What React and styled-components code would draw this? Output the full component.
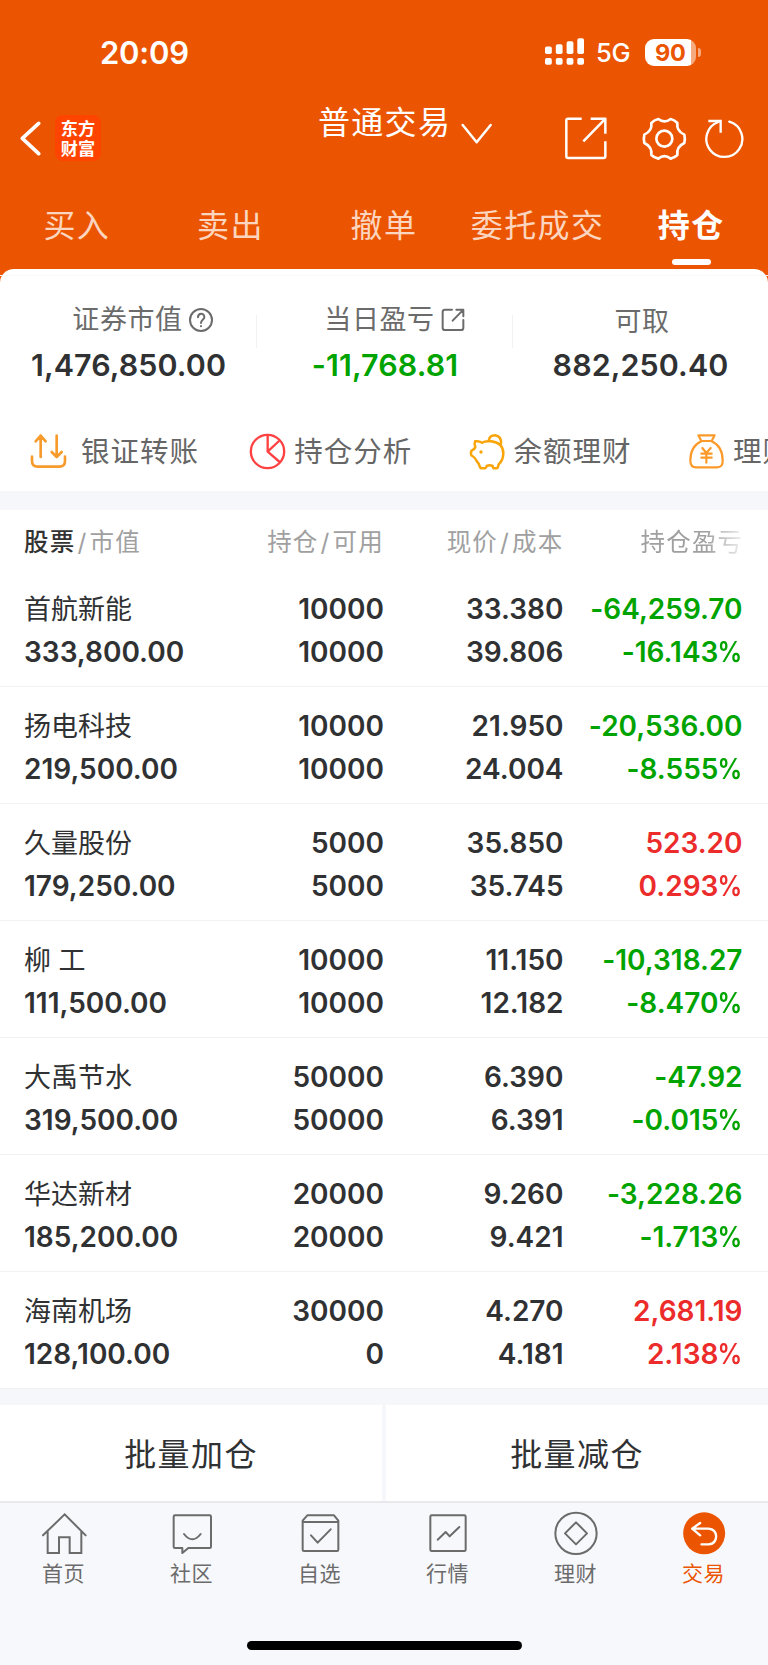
import React from "react";
import styled, { createGlobalStyle } from "styled-components";

const GlobalStyle = createGlobalStyle`
  * {
    box-sizing: border-box;
  }
  body {
    margin: 0;
    background: #f7f8fb;
    font-family: Inter, "Noto Sans CJK SC", sans-serif;
    color: #303133;
  }
  svg {
    display: block;
    flex: none;
  }
`;

const Page = styled.div`
  width: 768px;
  height: 1665px;
  display: flex;
  flex-direction: column;
  overflow: hidden;
  background: #f6f7fa;
`;

const Header = styled.header`
  height: 282px;
  flex: none;
  background: #eb5502;
  color: #fff;
`;

const StatusBar = styled.div`
  height: 104px;
  padding: 0 67px 0 100px;
  display: flex;
  align-items: center;
  justify-content: space-between;
`;

const Time = styled.span`
  font-size: 31px;
  font-weight: 600;
  line-height: 40px;
  letter-spacing: -0.2px;
  padding-top: 2px;
`;

const StatusRight = styled.div`
  display: flex;
  align-items: center;
`;

const Network = styled.span`
  margin-left: 12px;
  width: 49px;
  font-size: 25.5px;
  font-weight: 500;
  line-height: 30px;
  letter-spacing: -0.2px;
  padding-top: 2px;
`;

const Battery = styled.div`
  width: 51px;
  height: 27px;
  border-radius: 9px;
  background: linear-gradient(to right, #fff 46px, #f5aa80 46px);
  color: #eb5502;
  font-size: 23.5px;
  font-weight: 700;
  line-height: 27px;
  letter-spacing: -0.3px;
  padding-left: 10px;
`;

const BatteryTip = styled.div`
  width: 3px;
  height: 9px;
  margin-left: 2px;
  border-radius: 0 4px 4px 0;
  background: #f5aa80;
`;

const NavBar = styled.div`
  height: 68px;
  padding: 0 22px 0 20px;
  display: flex;
  align-items: center;
`;

const Logo = styled.div`
  width: 46px;
  height: 46px;
  margin-left: 14px;
  border-radius: 8px;
  background: #ff4400;
  font-size: 17.2px;
  font-weight: 700;
  line-height: 19.5px;
  text-align: center;
  padding-top: 4px;
`;

const NavTitle = styled.div`
  margin-left: 217px;
  width: 245.5px;
  height: 68px;
  display: flex;
  font-size: 32px;
  line-height: 38px;
  letter-spacing: 1.3px;

  svg {
    margin: 19px 0 0 10px;
  }
`;

const NavIcons = styled.div`
  display: flex;
  align-items: center;
  padding-top: 1px;

  svg:nth-child(2) {
    margin: 0 17.3px 0 33px;
  }
`;

const Tabs = styled.nav`
  display: grid;
  grid-template-columns: repeat(5, 1fr);
  height: 96px;
  padding-top: 31px;
`;

const Tab = styled.div`
  display: flex;
  flex-direction: column;
  align-items: center;
  font-size: 32px;
  line-height: 46px;
  letter-spacing: 1.4px;
  white-space: nowrap;
  color: ${(p) => (p.$active ? "#fff" : "#fbd5bf")};
  font-weight: ${(p) => (p.$active ? 700 : 400)};

  &::after {
    content: "";
    width: 39px;
    height: 6px;
    margin-top: 10px;
    border-radius: 3px;
    background: ${(p) => (p.$active ? "#fff" : "transparent")};
  }
`;

const Panel = styled.section`
  height: 222px;
  flex: none;
  margin-top: -13px;
  padding-top: 6px;
  border-radius: 14px 14px 0 0;
  background: #fff;
`;

const Summary = styled.div`
  height: 144px;
  border-top: 1px solid #f8f8f8;
  display: grid;
  grid-template-columns: 257px 256px 255px;
`;

const SummaryItem = styled.div`
  display: flex;
  flex-direction: column;
  align-items: center;
  padding-top: ${(p) => (p.$drop ? 30 : 28)}px;
  background-image: linear-gradient(#f2f2f2, #f2f2f2);
  background-repeat: no-repeat;
  background-size: ${(p) => (p.$divider ? "1px 33px" : "0 0")};
  background-position: right 39px;
`;

const SummaryLabel = styled.div`
  display: flex;
  align-items: center;
  gap: 6px;
  margin-left: ${(p) => p.$shift}px;
  color: #6b6b6b;
  font-size: 27px;
  line-height: 32px;
  letter-spacing: 0.6px;
`;

const SummaryValue = styled.div`
  margin-top: ${(p) => (p.$drop ? 10 : 12)}px;
  font-size: 30.4px;
  font-weight: 600;
  line-height: 34px;
  letter-spacing: 0.1px;
  font-feature-settings: "calt" 0;
  color: ${(p) => p.$color || "#303133"};
`;

const Actions = styled.div`
  height: 64px;
  display: flex;
  overflow: hidden;
  padding-left: 30px;
`;

const Action = styled.div`
  flex: none;
  width: 219.3px;
  display: flex;
  align-items: center;
  gap: ${(p) => p.$gap || 8}px;
  color: #666;
  font-size: 28.5px;
  line-height: 36px;
  letter-spacing: 1px;
  white-space: nowrap;

  span {
    padding-top: 2px;
  }
`;

const Holdings = styled.section`
  flex: none;
  margin-top: 19px;
  background: #fff;
`;

const columns = "200px 160px 179.5px 179px";

const TableHead = styled.div`
  height: 60px;
  padding: 3px 24px 0;
  display: grid;
  grid-template-columns: ${columns};
  align-items: center;
  font-size: 24.5px;
  line-height: 32px;
  letter-spacing: 1.2px;
  color: #a0a0a0;
  white-space: nowrap;
`;

const HeadCell = styled.div`
  text-align: ${(p) => (p.$left ? "left" : "right")};

  i {
    font-style: normal;
    margin: 0 2px;
  }
  b {
    font-weight: 500;
    color: #333;
  }
`;

const FadedCell = styled.div`
  padding-left: 77px;
  overflow: hidden;
  mask-image: linear-gradient(to right, #000 142px, transparent 186px);
`;

const Row = styled.div`
  height: 117px;
  padding: 18px 24px 0;
  display: grid;
  grid-template-columns: ${columns};
  border-bottom: 1px solid #f1f2f4;
`;

const Cell = styled.div`
  display: flex;
  flex-direction: column;
  align-items: ${(p) => (p.$left ? "flex-start" : "flex-end")};
  font-size: 28px;
  font-weight: 600;
  line-height: 43px;
  font-feature-settings: "calt" 0;
  white-space: nowrap;
  color: ${(p) => p.$color || "#303133"};
`;

const StockName = styled.span`
  font-size: 27px;
  font-weight: 400;
  white-space: pre;
`;

const Percent = styled.span`
  display: inline-block;
  transform: scaleX(0.88);
  transform-origin: right;
  margin-left: -4px;
`;

const BatchBar = styled.div`
  flex: none;
  height: 96px;
  margin-top: 16px;
  display: grid;
  grid-template-columns: 382px 382px;
  gap: 4px;
`;

const BatchButton = styled.div`
  background: #fff;
  display: flex;
  align-items: center;
  justify-content: center;
  padding-top: 4px;
  font-size: 32px;
  line-height: 40px;
  letter-spacing: 1.4px;
`;

const TabBar = styled.footer`
  flex: none;
  height: 164px;
  border-top: 2px solid #e9e9eb;
  background: #f7f8fb;
  display: flex;
  flex-direction: column;
  align-items: center;
`;

const TabBarItems = styled.div`
  width: 768px;
  height: 138px;
  display: grid;
  grid-template-columns: repeat(6, 128px);
`;

const TabBarItem = styled.div`
  display: flex;
  flex-direction: column;
  align-items: center;
  padding-top: 8px;
  font-size: 21px;
  line-height: 28px;
  letter-spacing: 0.6px;
  color: ${(p) => (p.$active ? "#eb5502" : "#6b6b6b")};

  span {
    margin: 4px 1px 0 0;
  }
`;

const HomeIndicator = styled.div`
  width: 275px;
  height: 9px;
  border-radius: 5px;
  background: #000;
`;

const GREEN = "#00a300";
const RED = "#ec2b2b";

const Icon = ({ box, w, h, stroke = "#fff", sw = 7.5, children }) => (
  <svg
    viewBox={box}
    width={w}
    height={h}
    fill="none"
    stroke={stroke}
    strokeWidth={sw}
    strokeLinecap="round"
    strokeLinejoin="round"
  >
    {children}
  </svg>
);

const SignalIcon = () => (
  <svg viewBox="0 0 39 28" width="39" height="28" fill="#fff">
    <rect x="0" y="8.5" width="6.8" height="7.6" rx="1.8" />
    <rect x="10.8" y="6.2" width="6.8" height="9.9" rx="1.8" />
    <rect x="21.6" y="3.2" width="6.8" height="12.9" rx="1.8" />
    <rect x="32.3" y="0.2" width="6.7" height="15.9" rx="1.8" />
    <rect x="0" y="20" width="6.8" height="6.8" rx="1.8" />
    <rect x="10.8" y="20" width="6.8" height="6.8" rx="1.8" />
    <rect x="21.6" y="20" width="6.8" height="6.8" rx="1.8" />
    <rect x="32.3" y="20" width="6.7" height="6.8" rx="1.8" />
  </svg>
);

const ShareIcon = () => (
  <Icon box="538 350 132 134" w={44} h={44.7} sw={7.5}>
    <path
      d="M591 358H550q-5 0-5 5V471q0 5 5 5H657q5 0 5-5V426M618 358H662V403M661 359L596 426"
      strokeLinecap="butt"
    />
  </Icon>
);

const GearIcon = () => (
  <Icon box="768 346 140 136" w={46.7} h={45.3} sw={8}>
    <path d="M820 355Q838 370 857 355Q869 358 877 367Q874 391 898 402Q901 414 898 427Q874 438 877 463Q869 471 857 474Q838 459 820 474Q807 471 799 463Q802 438 778 427Q775 414 778 402Q802 391 799 367Q807 358 820 355Z" />
    <circle cx="838" cy="414" r="24" />
  </Icon>
);

const RefreshIcon = () => (
  <Icon box="960 352 124 124" w={41.3} h={41.3} sw={7}>
    <path d="M1036 363A54 54 0 1 1 1003 364" />
    <path d="M973 361H1010V396" strokeLinejoin="miter" strokeLinecap="butt" />
  </Icon>
);

const HelpIcon = () => (
  <Icon box="0 0 72 72" w={24} h={24} stroke="#6b6b6b" sw={6}>
    <circle cx="36" cy="36" r="33" />
    <path d="M27 28C27 14 47 14 46 28C45 36 36 35 36 45" />
    <path d="M36 54V55" />
  </Icon>
);

const ExternalIcon = () => (
  <Icon box="0 0 72 72" w={24} h={24} stroke="#6b6b6b" sw={6}>
    <path d="M33 5H12Q5 5 5 12V59Q5 66 12 66H60Q67 66 67 59V36M46 5H67V25M65 7L35 38" />
  </Icon>
);

const TransferIcon = () => (
  <Icon box="90 518 111 108" w={37} h={36} stroke="#f79b2c" sw={8}>
    <path d="M122 590V526M107 543L122 526L137 543M170 526V590M155 575L170 590L185 575M96 589V602Q96 619 113 619H178Q195 619 195 602V589" />
  </Icon>
);

const PieIcon = () => (
  <Icon box="748 518 111 111" w={37} h={37} stroke="#ff4141" sw={7}>
    <circle cx="803.5" cy="573.5" r="50" />
    <path d="M804 525V574L840 605M804 574L838 542" />
  </Icon>
);

const PiggyIcon = () => (
  <Icon box="254 518 111 111" w={37} h={37} stroke="#f9a50a" sw={7.5}>
    <path d="M272 543Q284 541 293 547Q302 541 320 543Q357 547 357 580Q356 601 343 612L340 622Q339 624 335 624H329Q326 624 325 617Q316 613 307 617Q305 624 301 624H292Q287 624 284 612L277 602Q273 592 264 587Q260 586 260 582V575Q260 571 265 569Q271 566 273 560Q269 551 272 543Z" />
    <path d="M313 541Q316 525 332 525Q352 528 350 550" />
    <circle cx="290" cy="575" r="5" fill="#f9a50a" stroke="none" />
  </Icon>
);

const MoneyBagIcon = () => (
  <Icon box="911 518 111 111" w={37} h={37} stroke="#fb9a2a" sw={6.5}>
    <path d="M942 525H991L982 542H951ZM951 543Q918 558 918 601Q918 621 936 621H998Q1016 621 1015 601Q1015 558 982 543" />
    <path d="M954 563L966 578L979 563M966 578V607M951 580H982M951 592H982" />
  </Icon>
);

const HomeIcon = () => (
  <Icon box="126 391 135 135" w={45} h={45} stroke="#6b6b6b" sw={6}>
    <path
      d="M129 464L194 401L257 464M143 453V517H177V470H209V517H244V453"
      strokeLinejoin="miter"
    />
  </Icon>
);

const ChatIcon = () => (
  <Icon box="510 391 135 135" w={45} h={45} stroke="#6b6b6b" sw={6}>
    <path d="M525 404H629Q633 404 633 408V498Q633 502 629 502H565L547 517V502H525Q521 502 521 498V408Q521 404 525 404Z" />
    <path d="M552 460Q577 492 602 460" />
  </Icon>
);

const WatchIcon = () => (
  <Icon box="892 391 135 135" w={45} h={45} stroke="#6b6b6b" sw={6}>
    <path d="M920 404H1000L1013 420V507Q1013 511 1009 511H910Q906 511 906 507V420ZM907 424H1012M931 464L951 486L990 446" />
  </Icon>
);

const MarketIcon = () => (
  <Icon box="126 391 135 135" w={45} h={45} stroke="#6b6b6b" sw={6}>
    <rect x="139" y="404" width="106" height="107" rx="4" />
    <path d="M161 477L185 454L197 467L226 439" />
  </Icon>
);

const WealthIcon = () => (
  <Icon box="510 391 135 135" w={45} h={45} stroke="#6b6b6b" sw={6}>
    <circle cx="576" cy="458" r="62" />
    <path d="M576 425L609 458L576 491L543 458Z" />
  </Icon>
);

const TradeIcon = () => (
  <Icon box="893.5 391 135 135" w={45} h={45} sw={7}>
    <circle cx="960" cy="458" r="63" fill="#eb5502" stroke="none" />
    <path d="M948 427L924 444L948 464M924 444H973Q995 446 996 467Q995 490 973 491H952" />
  </Icon>
);

const stocks = [
  ["首航新能", "333,800.00", "10000", "10000", "33.380", "39.806", "-64,259.70", "-16.143"],
  ["扬电科技", "219,500.00", "10000", "10000", "21.950", "24.004", "-20,536.00", "-8.555"],
  ["久量股份", "179,250.00", "5000", "5000", "35.850", "35.745", "523.20", "0.293"],
  ["柳 工", "111,500.00", "10000", "10000", "11.150", "12.182", "-10,318.27", "-8.470"],
  ["大禹节水", "319,500.00", "50000", "50000", "6.390", "6.391", "-47.92", "-0.015"],
  ["华达新材", "185,200.00", "20000", "20000", "9.260", "9.421", "-3,228.26", "-1.713"],
  ["海南机场", "128,100.00", "30000", "0", "4.270", "4.181", "2,681.19", "2.138"],
];

const tabs = ["买入", "卖出", "撤单", "委托成交", "持仓"];

const footerTabs = [
  ["首页", HomeIcon],
  ["社区", ChatIcon],
  ["自选", WatchIcon],
  ["行情", MarketIcon],
  ["理财", WealthIcon],
  ["交易", TradeIcon],
];

const StockRow = ({ stock }) => {
  const [name, value, amount, usable, price, cost, profit, rate] = stock;
  return (
    <Row>
      <Cell $left>
        <StockName>{name}</StockName>
        <span>{value}</span>
      </Cell>
      <Cell>
        <span>{amount}</span>
        <span>{usable}</span>
      </Cell>
      <Cell>
        <span>{price}</span>
        <span>{cost}</span>
      </Cell>
      <Cell $color={profit.startsWith("-") ? GREEN : RED}>
        <span>{profit}</span>
        <span>
          {rate}
          <Percent>%</Percent>
        </span>
      </Cell>
    </Row>
  );
};

const App = () => {
  return (
    <Page>
      <GlobalStyle />
      <Header>
        <StatusBar>
          <Time>20:09</Time>
          <StatusRight>
            <SignalIcon />
            <Network>5G</Network>
            <Battery>90</Battery>
            <BatteryTip />
          </StatusRight>
        </StatusBar>
        <NavBar>
          <Icon box="60 362 63 105" w={21} h={35} sw={11}>
            <path d="M116 369L67 414L116 460" />
          </Icon>
          <Logo>
            东方
            <br />
            财富
          </Logo>
          <NavTitle>
            普通交易
            <Icon box="230 370 96 64" w={32} h={21.3} sw={7.5}>
              <path d="M235 376L277 428L319 376" />
            </Icon>
          </NavTitle>
          <NavIcons>
            <ShareIcon />
            <GearIcon />
            <RefreshIcon />
          </NavIcons>
        </NavBar>
        <Tabs>
          {tabs.map((t) => (
            <Tab key={t} $active={t === "持仓"}>
              {t}
            </Tab>
          ))}
        </Tabs>
      </Header>

      <Panel>
        <Summary>
          <SummaryItem $divider>
            <SummaryLabel $shift={28}>
              证券市值
              <HelpIcon />
            </SummaryLabel>
            <SummaryValue>1,476,850.00</SummaryValue>
          </SummaryItem>
          <SummaryItem $divider>
            <SummaryLabel $shift={19}>
              当日盈亏
              <ExternalIcon />
            </SummaryLabel>
            <SummaryValue $color={GREEN}>-11,768.81</SummaryValue>
          </SummaryItem>
          <SummaryItem $drop>
            <SummaryLabel $shift={3}>可取</SummaryLabel>
            <SummaryValue $drop>882,250.40</SummaryValue>
          </SummaryItem>
        </Summary>
        <Actions>
          <Action $gap={14}>
            <TransferIcon />
            <span>银证转账</span>
          </Action>
          <Action>
            <PieIcon />
            <span>持仓分析</span>
          </Action>
          <Action>
            <PiggyIcon />
            <span>余额理财</span>
          </Action>
          <Action>
            <MoneyBagIcon />
            <span>理财</span>
          </Action>
        </Actions>
      </Panel>

      <Holdings>
        <TableHead>
          <HeadCell $left>
            <b>股票</b>
            <i>/</i>市值
          </HeadCell>
          <HeadCell>
            持仓<i>/</i>可用
          </HeadCell>
          <HeadCell>
            现价<i>/</i>成本
          </HeadCell>
          <FadedCell>持仓盈亏</FadedCell>
        </TableHead>
        {stocks.map((s) => (
          <StockRow key={s[0]} stock={s} />
        ))}
      </Holdings>

      <BatchBar>
        <BatchButton>批量加仓</BatchButton>
        <BatchButton>批量减仓</BatchButton>
      </BatchBar>

      <TabBar>
        <TabBarItems>
          {footerTabs.map(([label, Glyph]) => (
            <TabBarItem key={label} $active={label === "交易"}>
              <Glyph />
              <span>{label}</span>
            </TabBarItem>
          ))}
        </TabBarItems>
        <HomeIndicator />
      </TabBar>
    </Page>
  );
};

export default App;
